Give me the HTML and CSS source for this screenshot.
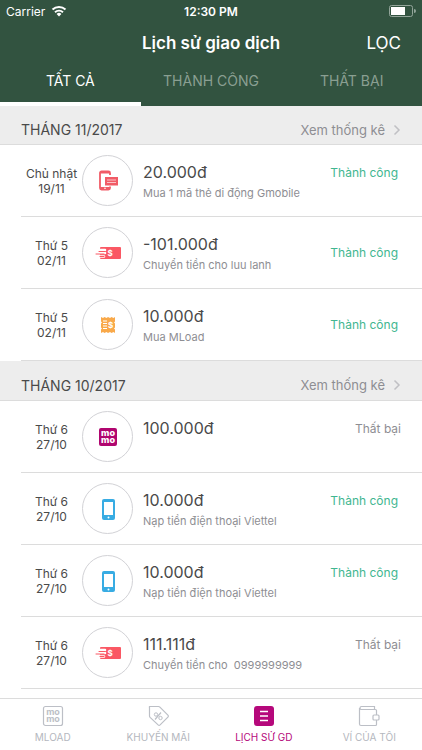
FILE: index.html
```html
<!DOCTYPE html>
<html lang="vi">
<head>
    <meta charset="UTF-8">
    <meta name="viewport" content="width=device-width, initial-scale=1.0">
    <title>Lịch sử giao dịch</title>
    <link rel="stylesheet" href="styles.css">
</head>
<body>
    <!-- shared icons -->
    <svg class="sprite" aria-hidden="true">
        <symbol id="icon-card" viewBox="0 0 26 26">
            <path d="M15 7V5a1.500 1.500 0 0 0-1.500-1.500H6.500A1.500 1.500 0 0 0 5 5v15a1.500 1.500 0 0 0 1.500 1.500h7a1.500 1.500 0 0 0 1.500-1.500v-1.500" fill="none" stroke="#f15b66" stroke-width="1.800"/>
            <path d="M5 19h10v2.500H5zM5 3.500h10v2H5z" fill="#f15b66"/>
            <circle cx="10" cy="20.300" r="0.800" fill="#fff"/>
            <rect x="10" y="9" width="13" height="8.500" fill="#f15b66"/>
            <path d="M12 12h9M12 14.500h9" stroke="#fbc3c7" stroke-width="1.200"/>
        </symbol>
        <symbol id="icon-transfer" viewBox="0 0 26 26">
            <rect x="5" y="7" width="21" height="12" rx="1" fill="#fa5864"/>
            <path d="M4 10h6M2 13h8M4 16.500h5" stroke="#fff" stroke-width="2.600" stroke-linecap="round"/>
            <path d="M4 11.500h6M1 14h8M5 16.500h4" stroke="#fa5864" stroke-linecap="round"/>
            <text x="15" y="16" class="sign">$</text>
        </symbol>
        <symbol id="icon-mload" viewBox="0 0 26 26">
            <path d="M6 5l2 1 1.500-1 2 1 1.500-1 2 1 1.500-1 2 1 1.500-1v4.500l-1 1 1 1v4l-1 1 1 1V21l-1.500-1-2 1-1.500-1-2 1-1.500-1-2 1-1.500-1-2 1v-3.500l1-1-1-1v-4l1-1-1-1z" fill="#f9a94a"/>
            <path d="M8 9h4M8 11.500h4M8 14h4M8 16.500h4" stroke="#fff"/>
            <text x="15.500" y="16" class="sign">$</text>
        </symbol>
        <symbol id="icon-momo" viewBox="0 0 26 26">
            <rect x="4" y="4" width="18" height="18" rx="2" fill="#b0066f"/>
            <text x="13" y="12" class="momo">mo</text>
            <text x="13" y="19" class="momo">mo</text>
        </symbol>
        <symbol id="icon-phone" viewBox="0 0 26 26">
            <rect x="7" y="3" width="13" height="21" rx="2" fill="#38ace3"/>
            <rect x="9" y="6" width="9" height="13" fill="#fff"/>
            <circle cx="13.500" cy="21.500" r="1" fill="#fff"/>
        </symbol>
    </svg>

    <header class="header">
        <div class="status-bar">
            <div class="carrier">
                Carrier
                <svg width="16" height="12" viewBox="0 0 16 12" fill="none" stroke="#fff" stroke-width="2">
                    <path d="M1.500 4.500a9.500 9.500 0 0 1 13 0M4 7.300a6 6 0 0 1 8 0"/>
                    <path d="M8 11.500L5.600 9a3.500 3.500 0 0 1 4.800 0z" fill="#fff" stroke="none"/>
                </svg>
            </div>
            <div class="time">12:30 PM</div>
            <div class="battery">
                <svg width="27" height="12" viewBox="0 0 27 12">
                    <rect x="0.500" y="0.500" width="23" height="11" rx="2" fill="none" stroke="#93a59a"/>
                    <rect x="2" y="2" width="14" height="8" fill="#fff"/>
                    <path d="M25 4a2 2 0 0 1 0 4z" fill="#93a59a"/>
                </svg>
            </div>
        </div>
        <div class="nav-bar">
            <h1 class="title">Lịch sử giao dịch</h1>
            <button class="filter">LỌC</button>
        </div>
        <div class="tabs">
            <button class="tab active">TẤT CẢ</button>
            <button class="tab">THÀNH CÔNG</button>
            <button class="tab">THẤT BẠI</button>
        </div>
    </header>

    <main class="content">
        <section>
            <div class="month">
                <h2>THÁNG 11/2017</h2>
                <a href="#">Xem thống kê
                    <svg width="8" height="12" viewBox="0 0 8 12"><path d="M1.500 1.500L6 6l-4.500 4.500" fill="none" stroke="#c0c0c4" stroke-width="1.500"/></svg>
                </a>
            </div>
            <div class="row">
                <div class="date">Chủ nhật<br>19/11</div>
                <div class="circle"><svg class="icon"><use href="#icon-card"/></svg></div>
                <div class="info">
                    <div class="amount">20.000đ</div>
                    <div class="note">Mua 1 mã thẻ di động Gmobile</div>
                </div>
                <div class="status success">Thành công</div>
            </div>
            <div class="row">
                <div class="date">Thứ 5<br>02/11</div>
                <div class="circle"><svg class="icon"><use href="#icon-transfer"/></svg></div>
                <div class="info">
                    <div class="amount">-101.000đ</div>
                    <div class="note">Chuyển tiền cho luu lanh</div>
                </div>
                <div class="status success middle">Thành công</div>
            </div>
            <div class="row">
                <div class="date">Thứ 5<br>02/11</div>
                <div class="circle"><svg class="icon"><use href="#icon-mload"/></svg></div>
                <div class="info">
                    <div class="amount">10.000đ</div>
                    <div class="note">Mua MLoad</div>
                </div>
                <div class="status success middle">Thành công</div>
            </div>
        </section>

        <section>
            <div class="month">
                <h2>THÁNG 10/2017</h2>
                <a href="#">Xem thống kê
                    <svg width="8" height="12" viewBox="0 0 8 12"><path d="M1.500 1.500L6 6l-4.500 4.500" fill="none" stroke="#c0c0c4" stroke-width="1.500"/></svg>
                </a>
            </div>
            <div class="row">
                <div class="date">Thứ 6<br>27/10</div>
                <div class="circle"><svg class="icon"><use href="#icon-momo"/></svg></div>
                <div class="info">
                    <div class="amount">100.000đ</div>
                </div>
                <div class="status failed">Thất bại</div>
            </div>
            <div class="row">
                <div class="date">Thứ 6<br>27/10</div>
                <div class="circle"><svg class="icon"><use href="#icon-phone"/></svg></div>
                <div class="info">
                    <div class="amount">10.000đ</div>
                    <div class="note">Nạp tiền điện thoại Viettel</div>
                </div>
                <div class="status success">Thành công</div>
            </div>
            <div class="row">
                <div class="date">Thứ 6<br>27/10</div>
                <div class="circle"><svg class="icon"><use href="#icon-phone"/></svg></div>
                <div class="info">
                    <div class="amount">10.000đ</div>
                    <div class="note">Nạp tiền điện thoại Viettel</div>
                </div>
                <div class="status success">Thành công</div>
            </div>
            <div class="row">
                <div class="date">Thứ 6<br>27/10</div>
                <div class="circle"><svg class="icon"><use href="#icon-transfer"/></svg></div>
                <div class="info">
                    <div class="amount">111.111đ</div>
                    <div class="note">Chuyển tiền cho &nbsp;0999999999</div>
                </div>
                <div class="status failed">Thất bại</div>
            </div>
        </section>
    </main>

    <nav class="bottom-nav">
        <a href="#">
            <svg width="22" height="22" viewBox="0 0 22 22">
                <rect x="1.500" y="1.500" width="19" height="19" rx="2" fill="none" stroke="#bcbfc6" stroke-width="1.200"/>
                <text x="11" y="10" class="momo momo-gray">mo</text>
                <text x="11" y="17" class="momo momo-gray">mo</text>
            </svg>
            MLOAD
        </a>
        <a href="#">
            <svg width="22" height="22" viewBox="0 0 22 22">
                <path d="M2.500 1.500h9a2 2 0 0 1 1.400.600l8 8a1.500 1.500 0 0 1 0 2l-7.800 7.800a1.500 1.500 0 0 1-2 0l-8-7.500a2 2 0 0 1-.600-1.400V2.500a1 1 0 0 1 0-1z" fill="none" stroke="#bcbfc6" stroke-width="1.200"/>
                <path d="M8 14.500l6-7" stroke="#bcbfc6" stroke-width="1.200"/>
                <circle cx="9" cy="9.500" r="1.700" fill="none" stroke="#bcbfc6"/>
                <circle cx="13.500" cy="13" r="1.700" fill="none" stroke="#bcbfc6"/>
            </svg>
            KHUYẾN MÃI
        </a>
        <a href="#" class="current">
            <svg width="22" height="22" viewBox="0 0 22 22">
                <rect x="1" y="1" width="20" height="20" rx="3" fill="#b5087b"/>
                <path d="M7 6.500h8M7 11h8M7 15.500h8" stroke="#fff" stroke-width="1.400"/>
            </svg>
            LỊCH SỬ GD
        </a>
        <a href="#">
            <svg width="22" height="22" viewBox="0 0 22 22" fill="none" stroke="#bcbfc6" stroke-width="1.200">
                <path d="M18.500 10V5.500a1 1 0 0 0-1-1H3.500a1.500 1.500 0 0 1 0-3h13v3M1.500 3v16a1.500 1.500 0 0 0 1.500 1.500h14.500a1 1 0 0 0 1-1V15"/>
                <rect x="15" y="10" width="6" height="5" rx="1"/>
            </svg>
            VÍ CỦA TÔI
        </a>
    </nav>
</body>
</html>
```
FILE: styles.css
```css
* {
    box-sizing: border-box;
}

body {
    margin: 0;
    min-height: 100vh;
    display: flex;
    flex-direction: column;
    font-family: Inter, "Noto Sans", sans-serif;
    color: #4a4a4a;
    background-color: #fff;
}

h1, h2 {
    margin: 0;
}

a {
    text-decoration: none;
    color: inherit;
}

button {
    font-family: inherit;
    border: none;
    background: none;
    padding: 0;
    cursor: pointer;
}

.sprite {
    display: none;
}

/* header */
.header {
    background-color: #325340;
    color: #fff;
}

.status-bar {
    display: grid;
    grid-template-columns: 1fr auto 1fr;
    align-items: center;
    height: 22px;
    padding: 0 6px;
    font-size: 12px;
}

.carrier {
    display: flex;
    align-items: center;
    gap: 6px;
}

.time {
    font-weight: 600;
}

.battery {
    display: flex;
    justify-content: flex-end;
}

.nav-bar {
    display: grid;
    grid-template-columns: 1fr auto 1fr;
    align-items: center;
    height: 42px;
    padding: 0 21px;
}

.title {
    grid-column: 2;
    font-size: 17px;
    font-weight: 600;
}

.filter {
    justify-self: end;
    color: #fff;
    font-size: 17px;
}

.tabs {
    display: grid;
    grid-template-columns: repeat(3, 1fr);
    height: 42px;
}

.tab {
    color: #8a9f92;
    font-size: 14px;
    padding-bottom: 6px;
    border-bottom: 4px solid transparent;
}

.tab.active {
    color: #fff;
    border-bottom-color: #fff;
}

/* transaction list */
.content {
    flex: 1;
}

.month {
    display: flex;
    justify-content: space-between;
    align-items: center;
    height: 39px;
    padding: 9px 21px 0;
    background-color: #ededed;
    border-bottom: 1px solid #dcdcdc;
}

section + section .month {
    height: 40px;
}

.month h2 {
    font-size: 14px;
    font-weight: 400;
}

.month a {
    display: flex;
    align-items: center;
    gap: 8px;
    font-size: 13px;
    color: #8e8e93;
}

.row {
    display: flex;
    align-items: center;
    height: 72px;
    margin-left: 21px;
    border-bottom: 1px solid #dcdcdc;
}

.date {
    width: 61px;
    font-size: 12px;
    line-height: 15px;
    text-align: center;
}

.circle {
    display: flex;
    align-items: center;
    justify-content: center;
    width: 51px;
    height: 51px;
    border: 1px solid #d2d2d6;
    border-radius: 50%;
}

.icon {
    width: 26px;
    height: 26px;
}

.sign {
    font-size: 8px;
    font-weight: 700;
    text-anchor: middle;
    fill: #fff;
}

.momo {
    font-size: 9px;
    font-weight: 800;
    text-anchor: middle;
    fill: #fff;
}

.momo-gray {
    fill: #bcbfc6;
    font-weight: 700;
}

.info {
    flex: 1;
    align-self: flex-start;
    padding: 17px 0 0 10px;
}

.amount {
    font-size: 16px;
    line-height: 20px;
}

.note {
    margin-top: 3px;
    font-size: 11px;
    line-height: 16px;
    color: #8e8e93;
}

.status {
    align-self: flex-start;
    padding: 19px 24px 0 0;
    font-size: 12px;
    line-height: 18px;
}

.success {
    color: #41b690;
}

.failed {
    padding-right: 21px;
    color: #8e8e93;
}

.middle {
    align-self: center;
    padding-top: 0;
}

/* bottom navigation */
.bottom-nav {
    display: grid;
    grid-template-columns: repeat(4, 1fr);
    height: 52px;
    padding-top: 6px;
    border-top: 1px solid #dcdcdc;
}

.bottom-nav a {
    display: flex;
    flex-direction: column;
    align-items: center;
    gap: 3px;
    font-size: 10px;
    line-height: 14px;
    color: #b4b7be;
}

.bottom-nav .current {
    color: #b5087b;
}
```
